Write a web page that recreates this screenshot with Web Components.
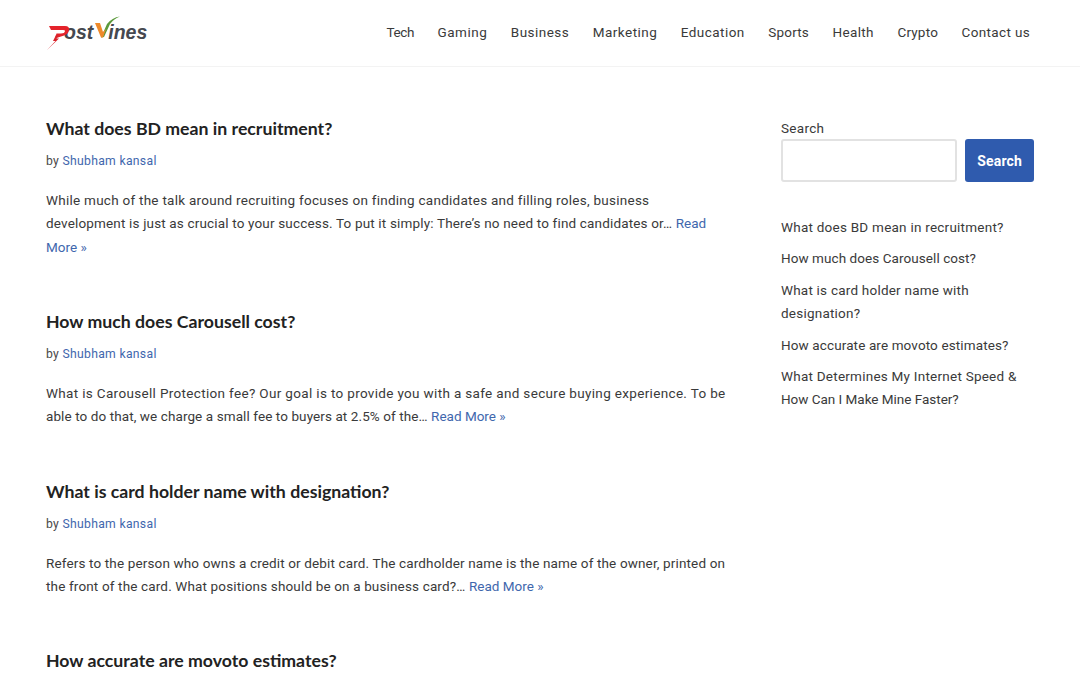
<!DOCTYPE html>
<html><head><meta charset="utf-8"><title>PostVines</title>
<style>
html,body{margin:0;padding:0;height:675px;overflow:hidden;background:#fff}
body{font-family:Roboto,"Liberation Sans",sans-serif;color:#3a3a3a}
</style></head><body>
<site-header></site-header>
<page-layout>
  <post-card title-text="What does BD mean in recruitment?">
    <text-line ls=".26">While much of the talk around recruiting focuses on finding candidates and filling roles, business</text-line>
    <text-line ls=".164">development is just as crucial to your success. To put it simply: There’s no need to find candidates or… <read-more>Read</read-more></text-line>
    <text-line ls=".26"><read-more>More »</read-more></text-line>
  </post-card>
  <post-card title-text="How much does Carousell cost?">
    <text-line ls=".335">What is Carousell Protection fee? Our goal is to provide you with a safe and secure buying experience. To be</text-line>
    <text-line ls=".09">able to do that, we charge a small fee to buyers at 2.5% of the… <read-more>Read More »</read-more></text-line>
  </post-card>
  <post-card title-text="What is card holder name with designation?">
    <text-line ls=".14">Refers to the person who owns a credit or debit card. The cardholder name is the name of the owner, printed on</text-line>
    <text-line ls=".15">the front of the card. What positions should be on a business card?… <read-more>Read More »</read-more></text-line>
  </post-card>
  <post-card title-text="How accurate are movoto estimates?" partial></post-card>
  <side-bar slot="side">
    <side-link ls=".24">What does BD mean in recruitment?</side-link>
    <side-link ls=".07">How much does Carousell cost?</side-link>
    <side-link ls=".22">What is card holder name with designation?</side-link>
    <side-link ls=".12">How accurate are movoto estimates?</side-link>
    <side-link ls=".24"><text-line ls=".24">What Determines My Internet Speed &amp;</text-line><text-line ls="-.02">How Can I Make Mine Faster?</text-line></side-link>
  </side-bar>
</page-layout>
<script>
function def(name, html, init){
  customElements.define(name, class extends HTMLElement{
    constructor(){super();this.attachShadow({mode:'open'}).innerHTML=html;}
    connectedCallback(){if(init)init(this);}
  });
}
const applyLs=el=>{if(el.hasAttribute('ls'))el.style.letterSpacing=el.getAttribute('ls')+'px';};
def('text-line',`<style>:host{display:block;white-space:nowrap}</style><slot></slot>`,applyLs);
def('read-more',`<style>:host{display:inline;color:#3f67ad;letter-spacing:0;cursor:pointer}</style><slot></slot>`);
def('side-link',`<style>:host{display:block}</style><slot></slot>`,applyLs);

def('site-logo',`<style>
:host{display:block;width:104px;height:36px}
.w{display:flex;align-items:flex-end;height:36px;position:relative;font:italic 700 19.5px/24px "Liberation Sans",sans-serif;color:#45484f;letter-spacing:0}
svg{position:absolute;left:0;top:0}
.a{margin-left:18px;padding-bottom:7px}
.b{margin-left:15px;padding-bottom:7px}
</style><div class="w"><svg width="104" height="36" viewBox="0 0 104 36" aria-hidden="true">
<path d="M3 11 H19 Q24 11 23 15.5 Q22 20 15 21.5 L9 23.5 L10.5 18.5 H15 Q18.5 18.5 19 16.3 Q19.2 15 17 15 H5 Z" fill="#e4232b"/>
<path d="M10 20 L7 26 H9.5 L1 35 L13 23.5 H10.5 L13 19.5Z" fill="#d9232b"/>
<path d="M55 22.5 L61 9 Q66 2.5 74 1.5 Q68 3.5 64 9 L58 22 Z" fill="#5b9a3c"/>
<path d="M49 8 H54 L57 17 L60 14 L57 22.5 H55 Z" fill="#ee8a2a"/>
</svg><span class="a">ost</span><span class="b">ines</span></div>`);

def('site-header',`<style>
:host{display:block;height:66px;border-bottom:1px solid #f3f3f3;box-sizing:content-box}
header{display:flex;align-items:center;justify-content:space-between;height:66px;padding:0 50px 0 46px}
nav{display:flex;gap:23.5px;font:400 13.5px/20px Roboto,sans-serif;color:#3a3a3a;letter-spacing:.35px;padding-bottom:3px}
</style><header><site-logo></site-logo><nav>
<span style="letter-spacing:-.4px">Tech</span><span style="letter-spacing:.5px">Gaming</span><span style="letter-spacing:.48px">Business</span><span style="letter-spacing:.46px">Marketing</span><span style="letter-spacing:.46px">Education</span><span style="letter-spacing:.2px">Sports</span><span>Health</span><span style="letter-spacing:.2px">Crypto</span><span>Contact us</span>
</nav></header>`);

def('page-layout',`<style>
:host{display:block}
.g{display:grid;grid-template-columns:686px 253px;column-gap:49px;padding:50px 46px 0}
main{display:flex;flex-direction:column;gap:50.8px}
</style><div class="g"><main><slot></slot></main><aside><slot name="side"></slot></aside></div>`);

def('post-card',`<style>
:host{display:block}
h2{margin:0 0 10px;font:700 17.7px/24px Lato,sans-serif;color:#222}
.by{font:400 12.2px/20px Roboto,sans-serif;color:#4a4a4a;letter-spacing:.3px;margin:0 0 18px}
a{color:#3f67ad;text-decoration:none}
.p{font:400 13.5px/23.4px Roboto,sans-serif;color:#3a3a3a}
:host([partial]) .body{display:none}
</style><article><h2 id="t"></h2><div class="body"><div class="by">by <a>Shubham kansal</a></div><div class="p"><slot></slot></div></div></article>`,
el=>{el.shadowRoot.getElementById('t').textContent=el.getAttribute('title-text');});

def('search-box',`<style>
:host{display:block}
label{display:block;font:400 13.5px/18px Roboto,sans-serif;color:#3a3a3a;letter-spacing:.3px;margin-bottom:2px}
.r{display:flex;gap:8px}
.i{width:177px;height:43px;box-sizing:border-box;border:2px solid #e2e2e2;border-radius:3px;background:#fff}
button{width:69px;height:43px;border:0;border-radius:3px;background:#2f5bae;color:#fff;font:700 14px Roboto,sans-serif;letter-spacing:.2px;padding:0}
</style><label>Search</label><div class="r"><div class="i"></div><button>Search</button></div>`);

def('side-bar',`<style>
:host{display:block;padding-top:2px}
.l{margin:34px 0 0;font:400 13.5px/23.4px Roboto,sans-serif;color:#3a3a3a;letter-spacing:.24px;display:flex;flex-direction:column;gap:8px;width:253px}
</style><search-box></search-box><div class="l"><slot></slot></div>`);
</script>
</body></html>
